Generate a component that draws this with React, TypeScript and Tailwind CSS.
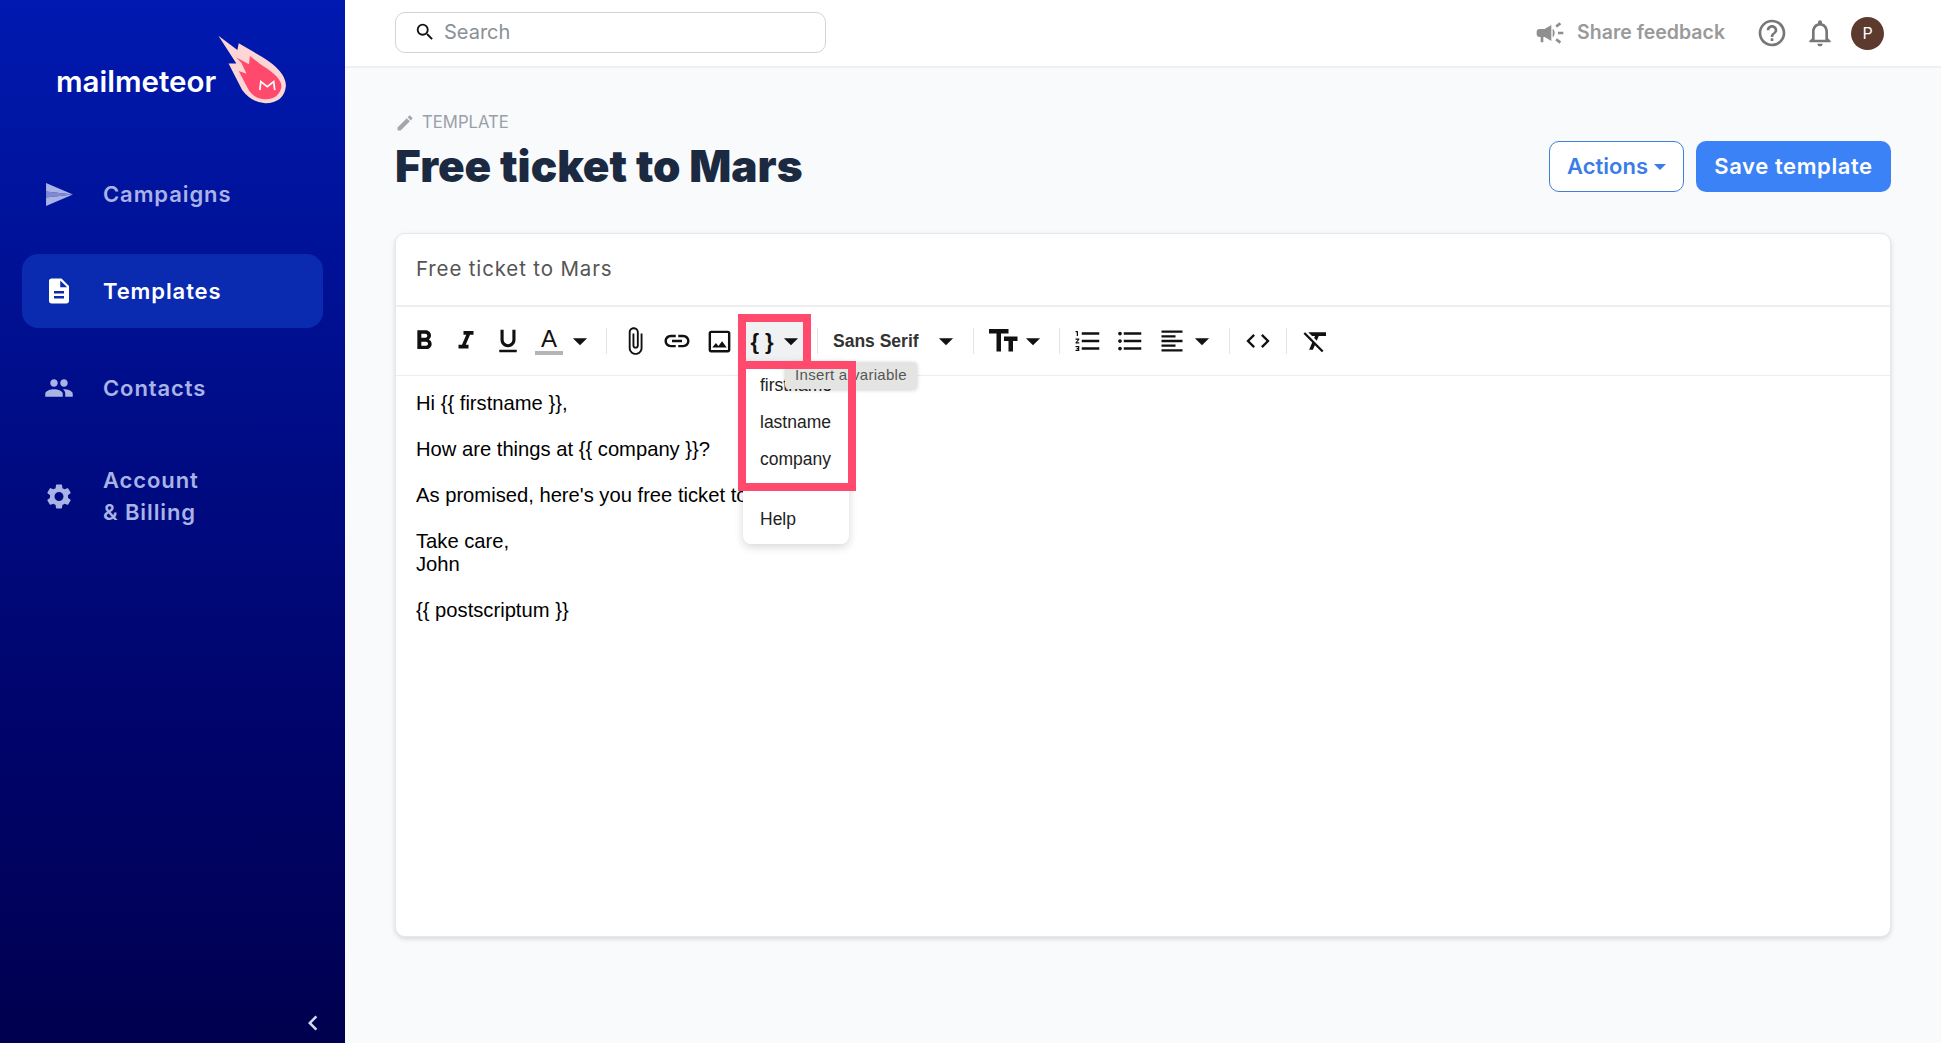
import React from "react";
import {
  MdPeople, MdSettings, MdDescription, MdSearch, MdEdit, MdCampaign, MdHelpOutline, MdOutlineNotifications,
  MdFormatBold, MdFormatItalic, MdFormatUnderlined, MdAttachFile, MdLink, MdOutlineImage, MdFormatSize,
  MdFormatListNumbered, MdFormatListBulleted, MdFormatAlignLeft, MdCode, MdFormatClear, MdArrowDropDown, MdChevronLeft,
} from "react-icons/md";

const SendIcon = () => (
  <svg width="29" height="25" viewBox="0 0 30 26" className="text-[#a9b3e6]">
    <path d="M1 1 L29 13 L1 10 Z" fill="currentColor" />
    <path d="M1 25 L29 13 L1 16 Z" fill="currentColor" />
    <path d="M1 10 L29 13 L1 16 Z" fill="currentColor" opacity="0.75" />
  </svg>
);

const Meteor = () => (
  <svg width="73" height="72" viewBox="655 100 215 212" className="shrink-0">
    <path d="M662 108 L718 150 L722 130 L790 170 Q860 212 861 255 Q856 305 800 307 Q760 305 732 268 L692 190 L715 190 Z" fill="#fdd5d5" />
    <path d="M715 172 L752 192 L755 168 L790 195 Q848 230 848 258 Q840 295 800 295 Q765 295 748 262 L722 212 L745 220 L730 188 Z" fill="#ff4a6e" />
    <path d="M784 268 L787 243 L806 258 L825 243 L828 268" fill="none" stroke="#fff" strokeWidth="5" />
  </svg>
);

const NavItem = ({ icon, label, active }: { icon: React.ReactNode; label: React.ReactNode; active?: boolean }) => (
  <div className={`flex items-center rounded-2xl mx-[22px] pl-[22px] ${active ? "bg-[#0a2bb0] text-white" : "text-[#a9b3e6]"}`}>
    <div className="w-[30px] flex justify-center shrink-0">{icon}</div>
    <div className="ml-[29px] py-[21px] text-[22px] leading-[32px] font-semibold tracking-[0.9px]">{label}</div>
  </div>
);

const Btn = ({ w, children, className = "" }: { w: string; children: React.ReactNode; className?: string }) => (
  <div className={`flex items-center justify-center h-[42px] shrink-0 text-[#111] [&>svg]:shrink-0 ${w} ${className}`}>{children}</div>
);
const Caret = () => <MdArrowDropDown size={34} className="text-[#111]" />;
const Sep = () => <div className="w-px h-[26px] bg-[#e2e4e8] shrink-0" />;

export default function App() {
  return (
    <div className="flex w-[1941px] h-[1043px] overflow-hidden bg-[#f8fafc] font-['Inter',sans-serif]">
      <aside className="relative w-[345px] shrink-0 flex flex-col bg-gradient-to-b from-[#0019b0] to-[#00004f]">
        <div className="flex items-start h-[157px] pl-[56px] pt-[33px]">
          <span className="mt-[29px] text-[29.5px] leading-[38px] font-semibold text-white whitespace-nowrap">mailmeteor</span>
          <Meteor />
        </div>
        <div className="flex flex-col gap-[23px]">
          <NavItem icon={<SendIcon />} label="Campaigns" />
          <NavItem active icon={<MdDescription size={34} />} label="Templates" />
          <NavItem icon={<MdPeople size={36} />} label="Contacts" />
          <div className="flex items-center mx-[22px] pl-[22px] text-[#a9b3e6] py-4">
            <div className="w-[30px] flex justify-center shrink-0"><MdSettings size={35} /></div>
            <div className="ml-[29px] text-[22px] leading-[32px] font-semibold tracking-[0.9px]">Account<br />&amp; Billing</div>
          </div>
        </div>
        <MdChevronLeft size={30} className="absolute left-[298px] top-[1008px] text-[#d7dbf2]" />
      </aside>

      <div className="flex-1 flex flex-col min-w-0">
        <header className="h-[68px] shrink-0 bg-white border-b-2 border-[#eef0f3] flex items-center pl-[50px] pr-[57px]">
          <div className="w-[431px] h-[41px] -mt-[2px] rounded-[10px] border border-[#cfd4da] bg-white flex items-center pl-[18px]">
            <MdSearch size={22} className="text-[#111]" />
            <span className="ml-[8px] text-[20px] leading-[24px] text-[#8a8f96]">Search</span>
          </div>
          <div className="ml-auto flex items-center">
            <MdCampaign size={32} className="text-[#8f8f8f]" />
            <span className="ml-[11px] text-[19.5px] font-semibold text-[#9a9a9a]">Share feedback</span>
            <MdHelpOutline size={32} className="ml-[31px] text-[#777]" />
            <MdOutlineNotifications size={32} className="ml-[16px] text-[#777]" />
            <div className="ml-[15px] w-[33px] h-[33px] rounded-full bg-[#5d3a2e] text-white text-[16px] flex items-center justify-center">P</div>
          </div>
        </header>

        <main className="flex-1 px-[50px] pt-[42px]">
          <div className="flex items-start justify-between h-[123px]">
            <div>
              <div className="flex items-center h-[24px] mt-px">
                <MdEdit size={20} className="text-[#a3a7ad]" />
                <span className="ml-[7px] text-[16.7px] text-[#9aa0a8]">TEMPLATE</span>
              </div>
              <h1 className="mt-[3px] text-[44px] leading-[56px] font-black text-[#1b2a41] tracking-[0px] whitespace-nowrap">Free ticket to Mars</h1>
            </div>
            <div className="flex gap-[12px] mt-[31px]">
              <div className="w-[135px] h-[51px] rounded-[10px] border border-[#3f7fdc] bg-white flex items-center justify-center text-[22px] font-semibold text-[#3b7de8]">
                Actions<span className="ml-[6px] w-0 h-0 border-x-[6px] border-x-transparent border-t-[6px] border-t-[#3b7de8]" />
              </div>
              <div className="w-[195px] h-[51px] rounded-[10px] bg-[#3b82f6] flex items-center justify-center text-[22px] font-semibold text-white tracking-[0.6px]">Save template</div>
            </div>
          </div>

          <section className="relative h-[704px] rounded-[10px] bg-white border border-[#e6e8eb] shadow-[0_2px_5px_rgba(0,0,0,0.14)]">
            <div className="h-[73px] border-b-2 border-[#eceef1] flex items-center pl-[20px] text-[20.5px] text-[#555] tracking-[0.85px]">Free ticket to Mars</div>
            <div className="relative h-[69px] border-b border-[#eceef1] flex items-center pl-[7px] font-['Liberation_Sans',sans-serif]">
              <div className="absolute left-[350px] top-[15px] w-[57px] h-[39px] bg-[#f0f1f2]" />
              <Btn w="w-[42px]"><MdFormatBold size={32} /></Btn>
              <Btn w="w-[42px]"><MdFormatItalic size={30} /></Btn>
              <Btn w="w-[42px]"><MdFormatUnderlined size={30} /></Btn>
              <Btn w="w-[40px]">
                <div className="flex flex-col items-center">
                  <span className="text-[24px] leading-[24px] text-[#111]">A</span>
                  <span className="w-[28px] h-[4px] bg-[#b5b5b5]" />
                </div>
              </Btn>
              <Btn w="w-[22px]"><Caret /></Btn>
              <div className="w-[15px]" /><Sep />
              <Btn w="w-[56px]"><MdAttachFile size={30} /></Btn>
              <Btn w="w-[28px]"><MdLink size={30} /></Btn>
              <Btn w="w-[56px]"><MdOutlineImage size={29} /></Btn>
              <Btn w="w-[30px]" className="relative"><span className="text-[22px] font-bold whitespace-nowrap">{"{ }"}</span></Btn>
              <Btn w="w-[28px]" className="relative"><Caret /></Btn>
              <div className="w-[12px]" /><Sep />
              <div className="w-[15px]" />
              <span className="w-[88px] text-[17.5px] font-bold text-[#333] whitespace-nowrap">Sans Serif</span>
              <Btn w="w-[50px]"><Caret /></Btn>
              <div className="w-[2px]" /><Sep />
              <Btn w="w-[44px]" className="ml-[8px]"><MdFormatSize size={36} className="-scale-x-100" /></Btn>
              <Btn w="w-[14px]"><Caret /></Btn>
              <div className="w-[19px]" /><Sep />
              <Btn w="w-[56px]"><MdFormatListNumbered size={30} /></Btn>
              <Btn w="w-[28px]"><MdFormatListBulleted size={30} /></Btn>
              <Btn w="w-[56px]"><MdFormatAlignLeft size={28} /></Btn>
              <Btn w="w-[4px]"><Caret /></Btn>
              <div className="w-[25px]" /><Sep />
              <Btn w="w-[56px]"><MdCode size={28} /></Btn>
              <Sep />
              <Btn w="w-[58px]"><MdFormatClear size={30} /></Btn>
            </div>
            <div className="pt-[16px] pl-[20px] text-[20.2px] leading-[23px] text-black font-['Liberation_Sans',sans-serif]">
              <p>Hi {"{{ firstname }}"},</p><br />
              <p>How are things at {"{{ company }}"}?</p><br />
              <p>As promised, here's you free ticket to Mars!</p><br />
              <p>Take care,</p>
              <p>John</p><br />
              <p>{"{{ postscriptum }}"}</p>
            </div>

            {/* open variable menu */}
            <div className="absolute left-[347px] top-[127px] w-[106px] h-[183px] rounded-lg bg-white shadow-[0_3px_10px_rgba(0,0,0,0.16)] font-['Liberation_Sans',sans-serif] text-[17.5px] text-[#222]">
              <div className="absolute left-[17px] top-[14px] leading-[20px]">firstname</div>
              <div className="absolute left-[17px] top-[51px] leading-[20px]">lastname</div>
              <div className="absolute left-[17px] top-[88px] leading-[20px]">company</div>
              <div className="absolute left-[17px] top-[148px] leading-[20px]">Help</div>
            </div>
            <div className="absolute left-[389px] top-[128px] w-[132px] h-[27px] rounded bg-[#e4e4e2] shadow-[0_1px_4px_rgba(0,0,0,0.2)] flex items-center justify-center font-['Liberation_Sans',sans-serif] text-[15px] text-[#555] tracking-[0.3px] whitespace-nowrap">Insert a variable</div>
            {/* annotation frames */}
            <div className="absolute left-[342px] top-[80px] w-[73px] h-[55px] border-[8px] border-[#ff4a6e]" />
            <div className="absolute left-[342px] top-[127px] w-[118px] h-[130px] border-[8px] border-[#ff4a6e]" />
          </section>
        </main>
      </div>
    </div>
  );
}
